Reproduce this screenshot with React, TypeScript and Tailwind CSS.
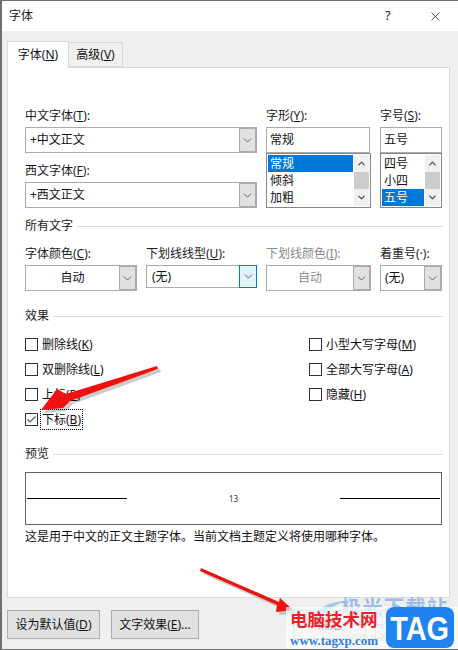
import { Check, ChevronDown, ChevronUp, X } from 'lucide-react'
import type { ReactNode } from 'react'

const font = { fontFamily: '"Noto Sans", "Noto Sans CJK SC", sans-serif' }

function Chevron({ className = 'text-[#444]' }: { className?: string }) {
  return <ChevronDown className={`w-[13px] h-[13px] ${className}`} strokeWidth={1.5} />
}

function Label({ children, dim }: { children: ReactNode; dim?: boolean }) {
  return <div className={`h-[20px] leading-[17px] whitespace-nowrap ${dim ? 'text-[#8a8a8a]' : 'text-[#1a1a1a]'}`}>{children}</div>
}

function Combo({ text, center, dim, width }: { text: string; center?: boolean; dim?: boolean; width: string }) {
  return (
    <div className={`${width} h-[26px] flex border border-[#ababab] bg-white box-border`}>
      <div className={`flex-1 flex items-center px-[4px] ${center ? 'justify-center' : ''} ${dim ? 'text-[#8a8a8a]' : 'text-[#111]'}`}>{text}</div>
      <div className="w-[18px] -my-px -mr-px bg-[#e1e1e1] flex items-center justify-center border-2 border-[#ababab] border-l-1">
        <Chevron />
      </div>
    </div>
  )
}

function ListBox({ items, selected, width }: { items: string[]; selected: number; width: string }) {
  return (
    <div className={`${width} h-[55px] border border-[#828790] bg-white flex p-[1px] box-border`}>
      <div className="flex-1 flex flex-col">
        {items.map((it, i) => (
          <div key={it} className={`h-[17px] leading-[17px] pl-[2px] ${i === selected ? 'bg-[#0078d7] text-white' : 'text-[#111]'}`}>{it}</div>
        ))}
      </div>
      <div className="w-[15px] ml-[1px] bg-[#f0f0f0] flex flex-col items-center justify-between">
        <ChevronUp className="w-[11px] h-[17px] text-[#555]" strokeWidth={3} />
        <div className="w-full h-[17px] bg-[#cdcdcd]" />
        <ChevronDown className="w-[11px] h-[17px] text-[#555]" strokeWidth={3} />
      </div>
    </div>
  )
}

function Section({ title, className = '' }: { title: string; className?: string }) {
  return (
    <div className={`flex items-center gap-[4px] ${className}`}>
      <span className="leading-[18px] text-[#1a1a1a]">{title}</span>
      <div className="flex-1 h-px bg-[#dcdcdc]" />
    </div>
  )
}

function CheckRow({ label, checked, focus }: { label: ReactNode; checked?: boolean; focus?: boolean }) {
  return (
    <div className="h-[25px] flex items-center">
      <div className="w-[13px] h-[13px] border border-[#333] bg-white flex items-center justify-center shrink-0">
        {checked && <Check className="w-[11px] h-[11px] text-[#555]" strokeWidth={2.5} />}
      </div>
      <span className={`ml-[3px] px-[1px] leading-[19px] text-[#111] whitespace-nowrap ${focus ? 'outline-1 outline-dotted outline-black' : ''}`}>{label}</span>
    </div>
  )
}

function Btn({ children, width }: { children: ReactNode; width: string }) {
  return (
    <div className={`${width} h-[29px] bg-[#e1e1e1] border border-[#adadad] flex items-center justify-center text-[#111]`}>{children}</div>
  )
}

const arrowA = 'M157 366 L158 369 L70 401 L63 408 L41 410 L57 389 L66 394 Z'
const arrowB = 'M201 568 L200 571 L277 605 L276 612 L293 610 L280 598 L279 602 Z'

export default function App() {
  return (
    <div className="relative w-[458px] h-[650px] overflow-hidden bg-[#efefef] border-l-2 border-t border-b border-[#6f6f6f] box-border text-[12px]" style={font}>
      {/* title bar */}
      <div className="h-[30px] bg-white flex items-center pl-[7px]">
        <span className="text-[#222] leading-none">字体</span>
        <span className="ml-auto text-[#222] text-[13px] w-[14px]">?</span>
        <X className="ml-[29px] mr-[15px] w-[15px] h-[15px] text-[#222]" strokeWidth={1.2} />
      </div>

      {/* tabs */}
      <div className="flex items-end h-[36px] pl-[5px]">
        <div className="relative z-10 w-[62px] h-[27px] -mb-px bg-white border border-[#d9d9d9] border-b-0 flex items-center justify-center text-[#111]">
          <span>字体(<u>N</u>)</span>
        </div>
        <div className="w-[54px] h-[25px] bg-[#f0f0f0] border border-l-0 border-[#d9d9d9] flex items-center justify-center text-[#111]">
          <span>高级(<u>V</u>)</span>
        </div>
      </div>

      {/* panel */}
      <div className="ml-[5px] w-[443px] h-[531px] bg-white border border-[#d9d9d9] box-border pl-[17px] pr-[6px] pt-[39px]">
        <div className="flex gap-[10px]">
          <div className="w-[231px]">
            <Label>中文字体(<u>T</u>):</Label>
            <Combo text="+中文正文" width="w-[232px]" />
            <div className="h-[9px]" />
            <Label>西文字体(<u>F</u>):</Label>
            <Combo text="+西文正文" width="w-[232px]" />
          </div>
          <div className="w-[104px]">
            <Label>字形(<u>Y</u>):</Label>
            <div className="h-[26px] border border-[#ababab] flex items-center px-[3px] text-[#111]">常规</div>
            <ListBox items={['常规', '倾斜', '加粗']} selected={0} width="w-[105px]" />
          </div>
          <div className="w-[62px]">
            <Label>字号(<u>S</u>):</Label>
            <div className="h-[26px] border border-[#ababab] flex items-center px-[3px] text-[#111]">五号</div>
            <ListBox items={['四号', '小四', '五号']} selected={2} width="w-[62px]" />
          </div>
        </div>

        <Section title="所有文字" className="mt-[9px]" />

        <div className="flex gap-[10px] mt-[10px]">
          <div className="w-[111px]">
            <Label>字体颜色(<u>C</u>):</Label>
            <Combo text="自动" center width="w-[112px]" />
          </div>
          <div className="w-[110px]">
            <Label>下划线线型(<u>U</u>):</Label>
            <div className="w-[111px] h-[23px] flex border border-[#ababab] bg-white box-border">
              <div className="flex-1 flex items-center px-[5px] text-[#111]">(无)</div>
              <div className="w-[18px] -my-px -mr-px bg-[#e5f1fb] border border-[#0078d7] flex items-center justify-center">
                <Chevron />
              </div>
            </div>
          </div>
          <div className="w-[104px]">
            <Label dim>下划线颜色(<u>I</u>):</Label>
            <Combo text="自动" center dim width="w-[105px]" />
          </div>
          <div className="w-[62px]">
            <Label>着重号(·):</Label>
            <Combo text="(无)" width="w-[62px]" />
          </div>
        </div>

        <Section title="效果" className="mt-[16px]" />

        <div className="flex mt-[7px]">
          <div className="w-[284px]">
            <CheckRow label={<>删除线(<u>K</u>)</>} />
            <CheckRow label={<>双删除线(<u>L</u>)</>} />
            <CheckRow label={<>上标(<u>P</u>)</>} />
            <CheckRow label={<>下标(<u>B</u>)</>} checked focus />
          </div>
          <div>
            <CheckRow label={<>小型大写字母(<u>M</u>)</>} />
            <CheckRow label={<>全部大写字母(<u>A</u>)</>} />
            <CheckRow label={<>隐藏(<u>H</u>)</>} />
          </div>
        </div>

        <Section title="预览" className="mt-[13px]" />

        <div className="mt-[9px] w-[417px] h-[53px] border border-[#646464] flex items-center justify-between px-[1px]">
          <div className="w-[100px] h-px bg-black" />
          <span className="text-[8px] text-[#333] mt-[1px]">13</span>
          <div className="w-[100px] h-px bg-black" />
        </div>
        <div className="mt-[3px] leading-[18px] text-[#111] whitespace-nowrap">这是用于中文的正文主题字体。当前文档主题定义将使用哪种字体。</div>
      </div>

      {/* footer */}
      <div className="flex items-center pl-[5px] mt-[12px]">
        <Btn width="w-[93px]">设为默认值(<u>D</u>)</Btn>
        <div className="ml-[11px]"><Btn width="w-[88px]">文字效果(<u>E</u>)...</Btn></div>
        <div className="ml-[94px]"><Btn width="w-[73px]">确定</Btn></div>
        <div className="ml-[9px]"><Btn width="w-[74px]">取消</Btn></div>
      </div>

      {/* annotation arrows */}
      <svg className="absolute left-[-2px] top-[-1px] pointer-events-none" width="458" height="650" viewBox="0 0 458 650" fill="none">
        <g fill="#000" opacity="0.2" transform="translate(3 3)">
          <path d={arrowA} />
          <path d={arrowB} />
        </g>
        <g fill="#f01010">
          <path d={arrowA} />
          <path d={arrowB} />
        </g>
      </svg>

      {/* faded site logo behind the watermark */}
      <svg className="absolute left-[308px] top-[597px] pointer-events-none" width="40" height="26" viewBox="0 0 40 26" fill="none">
        <path d="M2 22 C6 10 20 3 38 3 C24 7 14 12 10 24 Z" fill="#8fc4e8" opacity="0.8" />
        <path d="M8 25 C14 16 24 12 36 12 C26 15 20 19 18 25 Z" fill="#9fd8c0" opacity="0.7" />
      </svg>
      <span className="absolute left-[339px] top-[592px] text-[20px] font-bold text-[#9dbde6] tracking-[1.5px] whitespace-nowrap pointer-events-none">极光下载站</span>
      <span className="absolute left-[341px] top-[626px] text-[13px] font-bold text-[#a8dcae] whitespace-nowrap pointer-events-none">www.xz7</span>

      {/* site watermark */}
      <div className="absolute left-[284px] top-[606px] w-[174px] h-[44px] bg-white/70 pointer-events-none">
        <span className="absolute left-[4px] top-[-1px] text-[17.5px] font-bold text-[#f0202a] whitespace-nowrap leading-[26px]">电脑技术网</span>
        <span className="absolute left-[4px] top-[24px] text-[13px] font-bold text-[#2f7ee0] whitespace-nowrap" style={{ fontFamily: '"Liberation Serif", serif' }}>www.tagxp.com</span>
        <div className="absolute left-[100px] top-[0px] w-[68px] h-[41px] rounded-[8px] bg-[#1f83f0] flex items-center justify-center">
          <span className="text-white text-[34px] font-bold leading-none scale-x-[0.85]" style={{ fontFamily: '"Liberation Sans", sans-serif' }}>TAG</span>
        </div>
      </div>
    </div>
  )
}
